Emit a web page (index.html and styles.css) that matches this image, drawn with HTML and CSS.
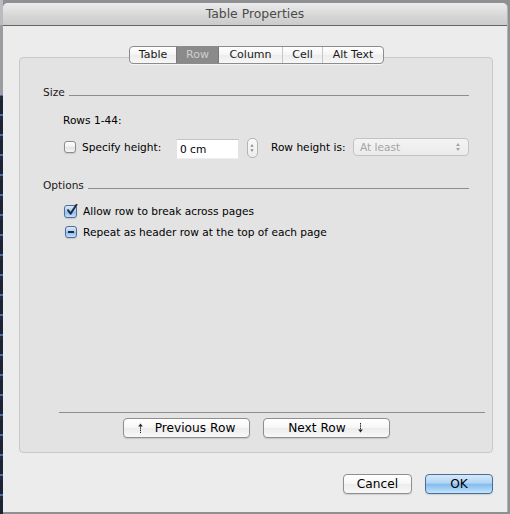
FILE: index.html
```html
<!DOCTYPE html>
<html lang="en">
<head>
<meta charset="utf-8">
<title>Table Properties</title>
<link rel="stylesheet" href="styles.css">
</head>
<body>
<div class="desk">
  <div class="desk-edge"></div>
  <div class="window">
    <div class="titlebar">Table Properties</div>
    <div class="content">
      <div class="tabs">
        <span class="tab tab-table">Table</span><span class="tab tab-row selected">Row</span><span class="tab tab-column">Column</span><span class="tab tab-cell">Cell</span><span class="tab tab-alt">Alt Text</span>
      </div>
      <div class="panel">
        <div class="section-head"><span>Size</span><i class="rule"></i></div>
        <div class="rows-label">Rows 1-44:</div>
        <div class="height-row">
          <span class="check"></span>
          <span class="lbl lbl-specify">Specify height:</span>
          <span class="field">0 cm</span>
          <span class="stepper">
            <svg width="11" height="20" viewBox="0 0 11 20"><path d="M5.5 5.5 L7.3 8.5 L3.7 8.5 Z" fill="#8c8c8c"/><path d="M5.5 14.5 L7.3 11.5 L3.7 11.5 Z" fill="#8c8c8c"/></svg>
          </span>
          <span class="lbl lbl-rowheight">Row height is:</span>
          <span class="popup">
            <span>At least</span>
            <svg width="6" height="10" viewBox="0 0 6 10"><path d="M3 1 L5 4 L1 4 Z" fill="#a6a6a6"/><path d="M3 9 L5 6 L1 6 Z" fill="#a6a6a6"/></svg>
          </span>
        </div>
        <div class="section-head options"><span>Options</span><i class="rule"></i></div>
        <div class="opt">
          <span class="check on">
            <svg width="13" height="13" viewBox="0 0 13 13"><path d="M3 6.2 L5.6 9.6 L11.5 0.8" fill="none" stroke="#1c2c44" stroke-width="2" stroke-linecap="round" stroke-linejoin="round"/></svg>
          </span>
          <span>Allow row to break across pages</span>
        </div>
        <div class="opt">
          <span class="check on mixed"><i class="dash"></i></span>
          <span>Repeat as header row at the top of each page</span>
        </div>
        <div class="panel-foot">
          <div class="sep"></div>
          <div class="nav">
            <button class="btn nav-btn">
              <svg width="7" height="10" viewBox="0 0 7 10"><path d="M3.5 2 V10" stroke="#222" stroke-width="1" stroke-dasharray="1.5 0.8"/><path d="M3.5 0.5 L5.8 3.5 L1.2 3.5 Z" fill="#222"/></svg>
              <span>Previous Row</span>
            </button>
            <button class="btn nav-btn">
              <span>Next Row</span>
              <svg width="7" height="10" viewBox="0 0 7 10"><path d="M3.5 0 V8" stroke="#222" stroke-width="1" stroke-dasharray="1.5 0.8"/><path d="M3.5 9.5 L5.8 6.5 L1.2 6.5 Z" fill="#222"/></svg>
            </button>
          </div>
        </div>
      </div>
      <div class="actions">
        <button class="btn cancel">Cancel</button>
        <button class="btn default">OK</button>
      </div>
    </div>
  </div>
</div>
</body>
</html>
```

FILE: styles.css
```css
* { box-sizing: border-box; }

html, body {
  margin: 0;
  padding: 0;
}

body {
  width: 510px;
  height: 514px;
  overflow: hidden;
  background: #8e9094;
  font-family: "DejaVu Sans", "Liberation Sans", sans-serif;
  font-size: 10.6px;
  color: #000;
}

.desk {
  display: flex;
  height: 514px;
  padding-top: 3px;
}

/* sliver of the document window behind the sheet */
.desk-edge {
  width: 3px;
  margin-top: -3px;
  height: 514px;
  background:
    linear-gradient(#b9bbbe 0, #b9bbbe 25px, #9a9ca0 25px, #9a9ca0 95px, transparent 95px),
    repeating-linear-gradient(#1b2433 0, #1b2433 14px, #4a6fa8 14px, #4a6fa8 16px, #222b3a 16px, #222b3a 20px);
}

.window {
  width: 504px;
  height: 509px;
  background: #ececec;
  border-radius: 5px 5px 0 0;
  display: flex;
  flex-direction: column;
  box-shadow: 1px 0 0 #b4b4b4;
}

.titlebar {
  height: 23px;
  flex: none;
  border-radius: 5px 5px 0 0;
  background: linear-gradient(#ebebeb, #d6d6d6 60%, #cbcbcb);
  border-bottom: 1px solid #636363;
  text-align: center;
  font-size: 12.4px;
  line-height: 22px;
  color: #4b4b4b;
}

.content {
  flex: 1;
  padding: 20px 14px 0 16px;
  display: flex;
  flex-direction: column;
}

/* segmented tab control */
.tabs {
  align-self: center;
  margin-left: 1px;
  display: flex;
  height: 18px;
  margin-bottom: -7px;
  position: relative;
  z-index: 1;
  border: 1px solid #8c8c8c;
  border-radius: 4px;
  background: linear-gradient(#ffffff, #f4f4f4 50%, #ececec 51%, #f7f7f7);
  box-shadow: 0 1px 0 rgba(255,255,255,0.6);
  overflow: hidden;
}

.tab {
  flex: none;
  line-height: 16px;
  text-align: center;
  font-size: 11px;
  color: #1a1a1a;
  border-left: 1px solid #c6c6c6;
}
.tab-table { width: 46px; border-left: none; }
.tab-row { width: 43px; }
.tab-column { width: 63px; }
.tab-cell { width: 40px; }
.tab-alt { width: 61px; }
.tab.selected {
  background: #8a8a8a;
  color: #cfcfcf;
  border-left: 1px solid #7a7a7a;
  border-right: 1px solid #7a7a7a;
}
.tab.selected + .tab { border-left: none; }

.panel {
  height: 396px;
  flex: none;
  background: #e3e3e3;
  border: 1px solid #c9c9c9;
  border-radius: 4px;
  padding: 26px 23px 14px 23px;
  display: flex;
  flex-direction: column;
}

.section-head {
  display: flex;
  align-items: flex-start;
  line-height: 16px;
  color: #1a1a1a;
}
.section-head .rule {
  flex: 1;
  height: 1px;
  margin: 11px 0 0 4px;
  background: #8e8e8e;
}
.section-head.options { margin-top: 18px; }

.rows-label {
  margin: 12px 0 0 20px;
  line-height: 16px;
}

.height-row {
  display: flex;
  align-items: flex-start;
  margin: 10px 0 0 20px;
  height: 21px;
}

.check {
  width: 12px;
  height: 12px;
  flex: none;
  border: 1px solid #8d8d8d;
  border-radius: 3px;
  background: linear-gradient(#ffffff, #f0f0f0 50%, #e2e2e2 51%, #f6f6f6);
  box-shadow: 0 1px 1px rgba(0,0,0,0.12);
}
.height-row .check { margin: 3px 0 0 1px; }

.lbl { line-height: 16px; }
.lbl-specify { margin: 1px 0 0 6px; width: 94px; }
.lbl-rowheight { margin: 1px 0 0 13px; width: 82px; }

.field {
  width: 63px;
  height: 20px;
  margin-top: 1px;
  background: #fff;
  border-top: 1px solid #c4c4c4;
  border-left: 1px solid #e2e2e2;
  border-right: 1px solid #e2e2e2;
  border-bottom: 1px solid #efefef;
  padding-left: 3px;
  line-height: 18px;
}

.stepper {
  margin-left: 8px;
  width: 11px;
  height: 20px;
  border: 1px solid #b4b4b4;
  border-radius: 5px;
  background: linear-gradient(#fafafa, #ececec);
  display: flex;
  align-items: center;
  justify-content: center;
}
.stepper svg { display: block; margin-left: -1px; }

.popup {
  width: 116px;
  height: 18px;
  border: 1px solid #c3c3c3;
  border-radius: 4px;
  background: linear-gradient(#f3f3f3, #ebebeb);
  display: flex;
  align-items: center;
  justify-content: space-between;
  padding: 0 7px 0 6px;
  color: #a4a4a4;
  line-height: 16px;
}
.popup svg { display: block; }

.opt {
  display: flex;
  align-items: center;
  line-height: 16px;
  margin-left: 21px;
}
.options + .opt { margin-top: 10px; }
.opt + .opt { margin-top: 5px; }
.opt .check { margin-right: 6px; }

.check.on {
  width: 13px;
  height: 13px;
  border: 1px solid #4e6d97;
  background: linear-gradient(#dbe9f7, #aacbee 50%, #8bb8e8 51%, #c4e0fa);
  position: relative;
}
.check.on svg { position: absolute; left: 0; top: -2px; }
.check.mixed {
  width: 12px;
  height: 12px;
  margin-left: 1px;
  margin-right: 6px;
  display: flex;
  align-items: center;
  justify-content: center;
}
.check.mixed .dash {
  width: 6px;
  height: 2px;
  background: #1c2c44;
}

.panel-foot {
  margin-top: auto;
}
.sep {
  height: 1px;
  background: #8e8e8e;
  margin: 0 -16px 0 16px;
}
.nav {
  display: flex;
  justify-content: center;
  gap: 13px;
  margin-top: 5px;
}

.btn {
  font-family: inherit;
  font-size: 12.2px;
  color: #000;
  height: 20px;
  border: 1px solid #8e8e8e;
  border-radius: 4px;
  background: linear-gradient(#ffffff, #f6f6f6 50%, #ececec 51%, #f8f8f8);
  box-shadow: 0 1px 1px rgba(0,0,0,0.12);
  padding: 0 0 1px 0;
  display: flex;
  align-items: center;
  justify-content: center;
  gap: 11px;
  line-height: 16px;
}

.nav-btn { width: 127px; }
.nav-btn svg { display: block; }

.actions {
  display: flex;
  justify-content: flex-end;
  gap: 13px;
  margin-top: 21px;
}
.cancel { width: 69px; }
.default {
  width: 68px;
  border-color: #4a6d9c;
  background: linear-gradient(#d6e8f9, #b2d4f3 45%, #85bbee 52%, #a6d3f7 80%, #c6e6fb);
}
```
